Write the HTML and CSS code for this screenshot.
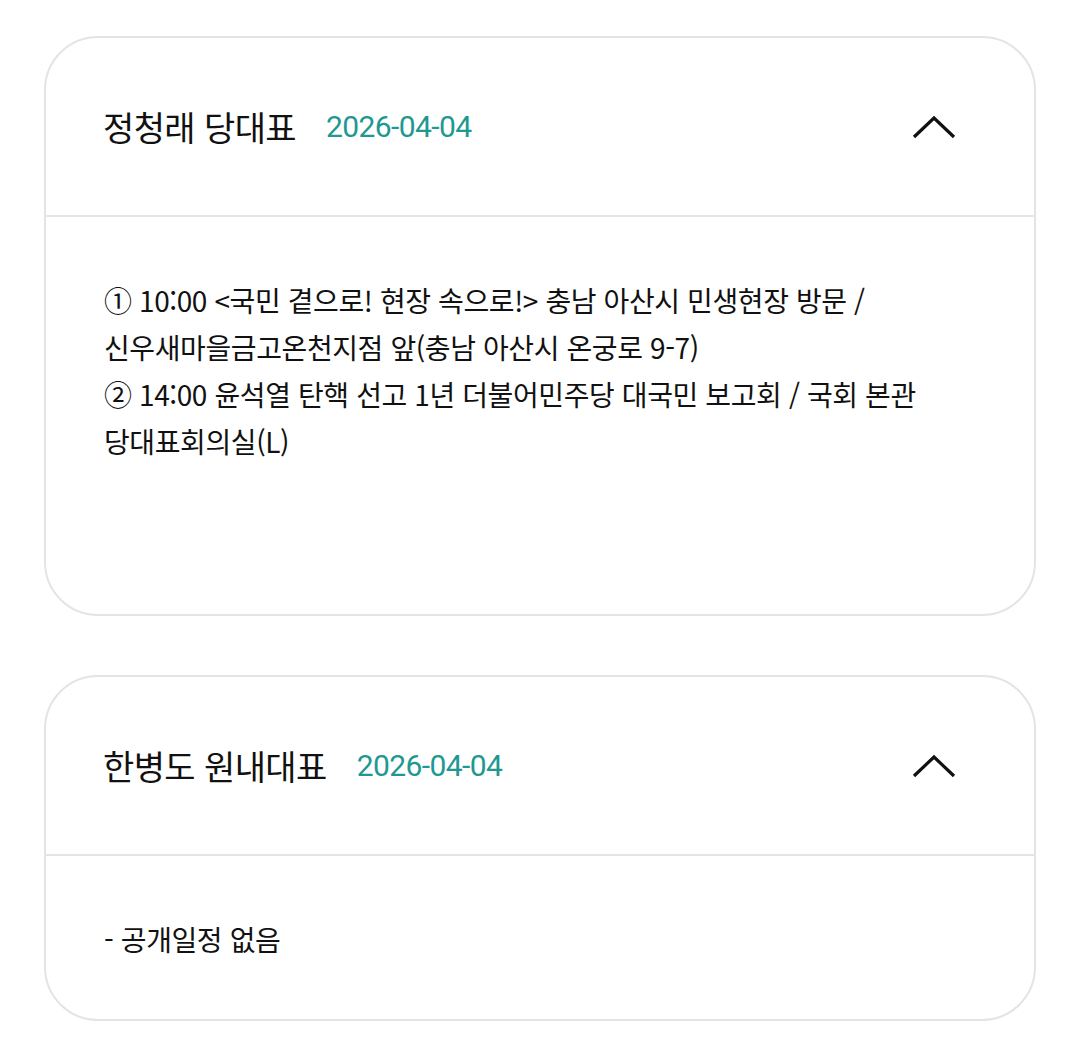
FILE: index.html
```html
<!DOCTYPE html>
<html lang="ko">
<head>
    <meta charset="UTF-8">
    <meta name="viewport" content="width=device-width, initial-scale=1.0">
    <title>오늘의 일정</title>
    <link rel="stylesheet" href="styles.css">
</head>
<body>
    <div class="schedule-list">
        <div class="card">
            <div class="card-header">
                <span class="name">정청래 당대표</span>
                <span class="date">2026-04-04</span>
                <svg class="toggle" width="44" height="26" viewBox="0 0 44 26" aria-hidden="true">
                    <polyline points="2,23 22,4 42,23" fill="none" stroke="#111" stroke-width="3.2" stroke-linejoin="miter"/>
                </svg>
            </div>
            <div class="card-body card-body-tall">① 10:00 &lt;국민 곁으로! 현장 속으로!&gt; 충남 아산시 민생현장 방문 /
신우새마을금고온천지점 앞(충남 아산시 온궁로 9-7)
② 14:00 윤석열 탄핵 선고 1년 더불어민주당 대국민 보고회 / 국회 본관 당대표회의실(L)</div>
        </div>

        <div class="card">
            <div class="card-header">
                <span class="name">한병도 원내대표</span>
                <span class="date">2026-04-04</span>
                <svg class="toggle" width="44" height="26" viewBox="0 0 44 26" aria-hidden="true">
                    <polyline points="2,23 22,4 42,23" fill="none" stroke="#111" stroke-width="3.2" stroke-linejoin="miter"/>
                </svg>
            </div>
            <div class="card-body">- 공개일정 없음</div>
        </div>
    </div>
</body>
</html>
```

FILE: styles.css
```css
body {
    margin: 0;
    background: #fff;
    color: #111;
    font-family: "Noto Sans CJK KR", "Noto Sans", sans-serif;
}
.schedule-list {
    display: flex;
    flex-direction: column;
    gap: 59px;
    padding: 36px 44px 0 44px;
}
.card {
    border: 2px solid #e4e4e4;
    border-radius: 54px;
    overflow: hidden;
}
.card-header {
    display: flex;
    align-items: center;
    height: 177px;
    padding: 0 78px 0 57px;
    border-bottom: 2px solid #e4e4e4;
}
.name {
    font-size: 34px;
    letter-spacing: -0.6px;
    line-height: 1;
}
.date {
    margin-left: 30px;
    font-family: Roboto, "Noto Sans", sans-serif;
    font-size: 30px;
    letter-spacing: -0.6px;
    color: #1f9892;
    line-height: 1;
}
.toggle {
    margin-left: auto;
}
.card-body {
    padding: 60px 60px 56px 58px;
    font-size: 28px;
    letter-spacing: -0.4px;
    line-height: 47px;
    white-space: pre-line;
    word-break: keep-all;
}
.card-body-tall {
    min-height: 281px;
}
```
